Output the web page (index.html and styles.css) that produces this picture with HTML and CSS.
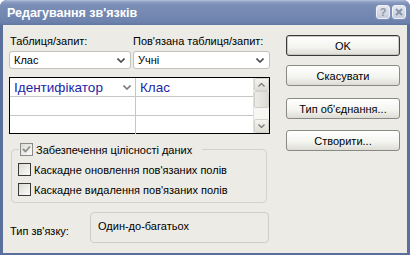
FILE: index.html
```html
<!DOCTYPE html>
<html lang="uk">
<head>
  <meta charset="UTF-8" />
  <title>Редагування зв'язків</title>
  <link rel="stylesheet" href="styles.css">
</head>
<body>
  <div class="window">
    <div class="titlebar">
      <span class="title">Редагування зв'язків</span>
      <div class="caption-btns">
        <span class="cap-btn">?</span>
        <span class="cap-btn">
          <svg width="8" height="8" viewBox="0 0 8 8"><path d="M1 1 L7 7 M7 1 L1 7" stroke="#8a94a8" stroke-width="2"/></svg>
        </span>
      </div>
    </div>

    <div class="client">
      <div class="main">
        <div class="left-col">
          <div class="pickers">
            <div class="picker picker-left">
              <div class="label">Таблиця/запит:</div>
              <div class="combo">
                <span>Клас</span>
                <svg class="chev" width="8" height="5" viewBox="0 0 8 5"><path d="M0.5 0.5 L4 4 L7.5 0.5" fill="none" stroke="#4a4a4a" stroke-width="1.6"/></svg>
              </div>
            </div>
            <div class="picker picker-right">
              <div class="label">Пов'язана таблиця/запит:</div>
              <div class="combo">
                <span>Учні</span>
                <svg class="chev" width="8" height="5" viewBox="0 0 8 5"><path d="M0.5 0.5 L4 4 L7.5 0.5" fill="none" stroke="#4a4a4a" stroke-width="1.6"/></svg>
              </div>
            </div>
          </div>

          <div class="grid">
            <div class="grid-rows">
              <div class="grid-row head">
                <div class="cell cell-left">
                  <span>Ідентифікатор</span>
                  <svg class="chev" width="8" height="5" viewBox="0 0 8 5"><path d="M0.5 0.5 L4 4 L7.5 0.5" fill="none" stroke="#7a7a7a" stroke-width="1.6"/></svg>
                </div>
                <div class="cell">Клас</div>
              </div>
              <div class="grid-row">
                <div class="cell cell-left"></div>
                <div class="cell"></div>
              </div>
              <div class="grid-row">
                <div class="cell cell-left"></div>
                <div class="cell"></div>
              </div>
            </div>
            <div class="vscroll">
              <div class="sb-btn">
                <svg width="7" height="4" viewBox="0 0 7 4"><path d="M0.5 3.5 L3.5 0.5 L6.5 3.5" fill="none" stroke="#7b7b7b" stroke-width="1.3"/></svg>
              </div>
              <div class="sb-thumb"></div>
              <div class="sb-track"></div>
              <div class="sb-btn">
                <svg width="7" height="4" viewBox="0 0 7 4"><path d="M0.5 0.5 L3.5 3.5 L6.5 0.5" fill="none" stroke="#7b7b7b" stroke-width="1.3"/></svg>
              </div>
            </div>
          </div>

          <fieldset class="group">
            <legend class="check-line">
              <span class="checkbox checked">
                <svg width="9" height="9" viewBox="0 0 9 9"><path d="M1 4 L3.5 6.5 L8 1.5" fill="none" stroke="#8c8c8c" stroke-width="1.8"/></svg>
              </span>
              <span>Забезпечення цілісності даних</span>
            </legend>
            <div class="check-line row">
              <span class="checkbox"></span>
              <span>Каскадне оновлення пов'язаних полів</span>
            </div>
            <div class="check-line row">
              <span class="checkbox"></span>
              <span>Каскадне видалення пов'язаних полів</span>
            </div>
          </fieldset>
        </div>

        <div class="buttons">
          <div class="btn btn-default btn-ok">OK</div>
          <div class="btn btn-cancel">Скасувати</div>
          <div class="btn btn-join">Тип об'єднання...</div>
          <div class="btn btn-new">Створити...</div>
        </div>
      </div>

      <div class="reltype">
        <div class="reltype-label">Тип зв'язку:</div>
        <div class="reltype-box">Один-до-багатьох</div>
      </div>
    </div>
  </div>
</body>
</html>
```

FILE: styles.css
```css
body {
  margin: 0;
  width: 412px;
  height: 255px;
  overflow: hidden;
  background: #fff;
  font-family: 'Liberation Sans', Arial, sans-serif;
  font-size: 11px;
  color: #000;
}

.window {
  width: 410px;
  height: 255px;
  box-sizing: border-box;
  background: #5b6f9c;
  border-radius: 7px 7px 0 0;
  display: flex;
  flex-direction: column;
}

.titlebar {
  height: 25px;
  flex: none;
  display: flex;
  align-items: center;
  padding: 0 4px 0 7px;
  border-radius: 7px 7px 0 0;
  background: linear-gradient(to bottom, #b4c1da 0px, #8b9dc2 2px, #7a8db5 5px, #7489b2 14px, #6c81ac 22px, #62779f 25px);
}

.title {
  flex: 1;
  color: #fff;
  font-weight: bold;
  font-size: 12.5px;
  padding-top: 1px;
}

.caption-btns {
  display: flex;
  gap: 2px;
  margin-top: -1px;
}

.cap-btn {
  width: 12px;
  height: 12px;
  border: 1px solid #eef1f7;
  border-radius: 3px;
  background: linear-gradient(to bottom, #e4e8f0, #c5cddd);
  box-shadow: 0 0 0 1px #7d8fb4;
  display: flex;
  align-items: center;
  justify-content: center;
  font-weight: bold;
  font-size: 11px;
  color: #8a94a8;
}

.client {
  flex: 1;
  margin: 0 3px 2px 3px;
  background: #ecebe5;
  padding: 10px 0 0 6px;
}

.main {
  display: flex;
}

.left-col {
  width: 261px;
}

.pickers {
  display: flex;
}

.picker-left {
  width: 122px;
}

.picker-right {
  width: 139px;
}

.label {
  height: 13px;
  line-height: 13px;
  padding-left: 1px;
  margin-bottom: 3px;
}

.picker-right .label {
  padding-left: 2px;
}

.combo {
  height: 18px;
  box-sizing: border-box;
  border: 1px solid #c2c2ba;
  border-radius: 3px;
  background: #fff;
  display: flex;
  align-items: center;
  justify-content: space-between;
  padding: 0 5px 0 4px;
}

.picker-right .combo {
  margin-left: 2px;
}

.grid {
  margin-top: 8px;
  height: 57px;
  box-sizing: border-box;
  border: 1px solid #000;
  display: flex;
  background: #fff;
}

.grid-rows {
  flex: 1;
}

.grid-row {
  height: 18px;
  display: flex;
  border-bottom: 1px solid #c6c6c6;
}

.grid-row:last-child {
  border-bottom: none;
}

.cell {
  flex: 1;
  display: flex;
  align-items: center;
  padding-left: 4px;
}

.cell-left {
  flex: none;
  width: 117px;
  border-right: 1px solid #c6c6c6;
  justify-content: space-between;
  padding-right: 4px;
}

.head .cell {
  color: #1b26a6;
  font-size: 13.5px;
}

.vscroll {
  width: 15px;
  display: flex;
  flex-direction: column;
  background: #f6f6f3;
  border-left: 1px solid #e0e0da;
}

.sb-btn {
  height: 13px;
  box-sizing: border-box;
  border: 1px solid #d4d4cc;
  border-radius: 2px;
  background: linear-gradient(to bottom, #f4f4f1, #dedcd4);
  display: flex;
  align-items: center;
  justify-content: center;
}

.sb-btn:last-child {
  margin-top: auto;
  height: 14px;
}

.sb-thumb {
  height: 17px;
  box-sizing: border-box;
  border: 1px solid #d0d0c8;
  border-radius: 2px;
  background: linear-gradient(to right, #ecebe6, #dcdbd3);
}

.group {
  margin: 9px 3px 0 2px;
  padding: 0 0 6px 6px;
  border: 1px solid #d3d2c6;
  border-radius: 4px;
}

.group legend {
  padding: 0 10px 0 1px;
  margin-left: 1px;
}

.check-line {
  display: flex;
  align-items: center;
  gap: 3px;
  height: 13px;
}

.row {
  margin-top: 7px;
}

.checkbox {
  width: 11px;
  height: 11px;
  border: 1px solid #3b3b3b;
  background: linear-gradient(135deg, #dcdcd5, #fafaf8);
  display: flex;
  align-items: center;
  justify-content: center;
}

.checkbox.checked {
  border-color: #8a8a8a;
}

.buttons {
  margin-left: 16px;
  width: 114px;
  display: flex;
  flex-direction: column;
}

.btn {
  height: 21px;
  box-sizing: border-box;
  border: 1px solid #8a8a84;
  border-radius: 3px;
  background: linear-gradient(to bottom, #ffffff, #f3f3ef 60%, #dddcd4);
  display: flex;
  align-items: center;
  justify-content: center;
}

.btn-default {
  border-color: #3a3a3a;
  box-shadow: inset 0 0 0 1px #c9c9c2;
}

.btn-cancel {
  margin-top: 9px;
}

.btn-join {
  margin-top: 12px;
}

.btn-new {
  margin-top: 11px;
}

.reltype {
  display: flex;
  margin-top: 9px;
}

.reltype-label {
  width: 81px;
  padding-top: 13px;
  padding-left: 1px;
  box-sizing: border-box;
}

.reltype-box {
  width: 179px;
  height: 31px;
  box-sizing: border-box;
  border: 1px solid #d0cfc3;
  border-radius: 4px;
  padding: 7px 0 0 7px;
}
```
